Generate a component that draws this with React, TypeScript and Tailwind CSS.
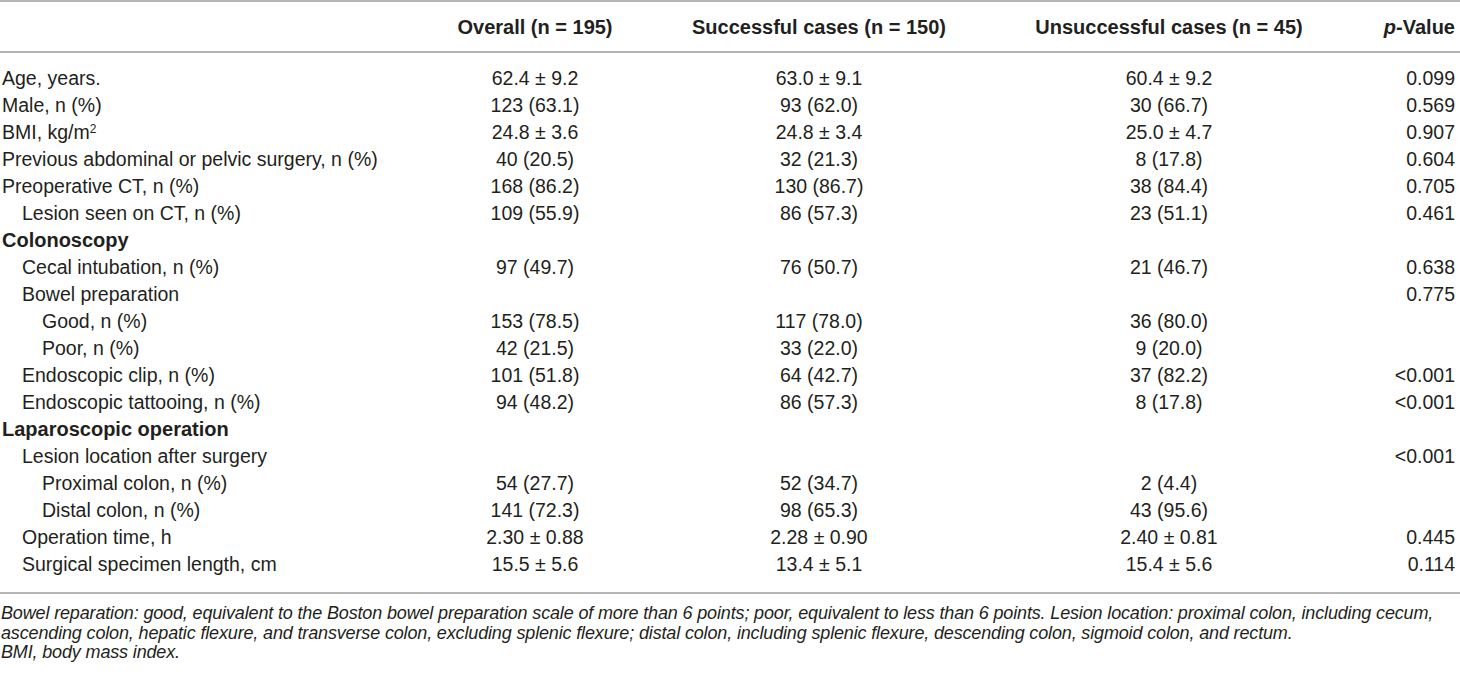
import React from "react";

type Row = {
  label: React.ReactNode;
  lvl?: 0 | 1 | 2;
  section?: boolean;
  o?: string;
  s?: string;
  u?: string;
  p?: string;
};

const rows: Row[] = [
  { label: "Age, years.", lvl: 0, o: "62.4 ± 9.2", s: "63.0 ± 9.1", u: "60.4 ± 9.2", p: "0.099" },
  { label: "Male, n (%)", lvl: 0, o: "123 (63.1)", s: "93 (62.0)", u: "30 (66.7)", p: "0.569" },
  {
    label: (
      <>
        BMI, kg/m<sup className="text-[12px]">2</sup>
      </>
    ),
    lvl: 0,
    o: "24.8 ± 3.6",
    s: "24.8 ± 3.4",
    u: "25.0 ± 4.7",
    p: "0.907",
  },
  { label: "Previous abdominal or pelvic surgery, n (%)", lvl: 0, o: "40 (20.5)", s: "32 (21.3)", u: "8 (17.8)", p: "0.604" },
  { label: "Preoperative CT, n (%)", lvl: 0, o: "168 (86.2)", s: "130 (86.7)", u: "38 (84.4)", p: "0.705" },
  { label: "Lesion seen on CT, n (%)", lvl: 1, o: "109 (55.9)", s: "86 (57.3)", u: "23 (51.1)", p: "0.461" },
  { label: "Colonoscopy", section: true },
  { label: "Cecal intubation, n (%)", lvl: 1, o: "97 (49.7)", s: "76 (50.7)", u: "21 (46.7)", p: "0.638" },
  { label: "Bowel preparation", lvl: 1, p: "0.775" },
  { label: "Good, n (%)", lvl: 2, o: "153 (78.5)", s: "117 (78.0)", u: "36 (80.0)" },
  { label: "Poor, n (%)", lvl: 2, o: "42 (21.5)", s: "33 (22.0)", u: "9 (20.0)" },
  { label: "Endoscopic clip, n (%)", lvl: 1, o: "101 (51.8)", s: "64 (42.7)", u: "37 (82.2)", p: "<0.001" },
  { label: "Endoscopic tattooing, n (%)", lvl: 1, o: "94 (48.2)", s: "86 (57.3)", u: "8 (17.8)", p: "<0.001" },
  { label: "Laparoscopic operation", section: true },
  { label: "Lesion location after surgery", lvl: 1, p: "<0.001" },
  { label: "Proximal colon, n (%)", lvl: 2, o: "54 (27.7)", s: "52 (34.7)", u: "2 (4.4)" },
  { label: "Distal colon, n (%)", lvl: 2, o: "141 (72.3)", s: "98 (65.3)", u: "43 (95.6)" },
  { label: "Operation time, h", lvl: 1, o: "2.30 ± 0.88", s: "2.28 ± 0.90", u: "2.40 ± 0.81", p: "0.445" },
  { label: "Surgical specimen length, cm", lvl: 1, o: "15.5 ± 5.6", s: "13.4 ± 5.1", u: "15.4 ± 5.6", p: "0.114" },
];

const gridCols = "grid grid-cols-[440px_190px_378px_322px_130px]";

export default function App() {
  return (
    <div className="w-[1460px] h-[677px] overflow-hidden bg-white text-[#231f20] font-['Liberation_Sans',Arial,sans-serif]">
      <div className="h-[2px] bg-[#b4b4b4]" />
      <div className={`${gridCols} h-[49px] items-center text-[20px] font-bold`}>
        <div />
        <div className="text-center whitespace-nowrap">Overall (n = 195)</div>
        <div className="text-center whitespace-nowrap">Successful cases (n = 150)</div>
        <div className="text-center whitespace-nowrap">Unsuccessful cases (n = 45)</div>
        <div className="text-right pr-[5px] whitespace-nowrap">
          <span className="italic">p</span>-Value
        </div>
      </div>
      <div className="h-[2px] bg-[#b4b4b4]" />
      <div className="pt-[12px] text-[19.5px]">
        {rows.map((r, i) => (
          <div key={i} className={`${gridCols} h-[27px] items-center leading-[27px]`}>
            {r.section ? (
              <div className="pl-[2px] font-bold text-[20px] whitespace-nowrap">{r.label}</div>
            ) : (
              <div
                className={`whitespace-nowrap ${
                  r.lvl === 0 ? "pl-[2px]" : r.lvl === 1 ? "pl-[22px]" : "pl-[42px]"
                }`}
              >
                {r.label}
              </div>
            )}
            <div className="text-center whitespace-nowrap">{r.o ?? ""}</div>
            <div className="text-center whitespace-nowrap">{r.s ?? ""}</div>
            <div className="text-center whitespace-nowrap">{r.u ?? ""}</div>
            <div className="text-right pr-[5px] whitespace-nowrap">{r.p ?? ""}</div>
          </div>
        ))}
      </div>
      <div className="mt-[14px] h-[2px] bg-[#b4b4b4]" />
      <div className="pt-[10px] pl-[1px] text-[18px] leading-[19.5px] italic tracking-[-0.15px] font-['Liberation_Sans_Narrow','Liberation_Sans',Arial,sans-serif]">
        <div className="whitespace-nowrap">
          Bowel reparation: good, equivalent to the Boston bowel preparation scale of more than 6 points; poor, equivalent to less than 6 points. Lesion location: proximal colon, including cecum,
        </div>
        <div className="whitespace-nowrap">
          ascending colon, hepatic flexure, and transverse colon, excluding splenic flexure; distal colon, including splenic flexure, descending colon, sigmoid colon, and rectum.
        </div>
        <div className="whitespace-nowrap">BMI, body mass index.</div>
      </div>
    </div>
  );
}
